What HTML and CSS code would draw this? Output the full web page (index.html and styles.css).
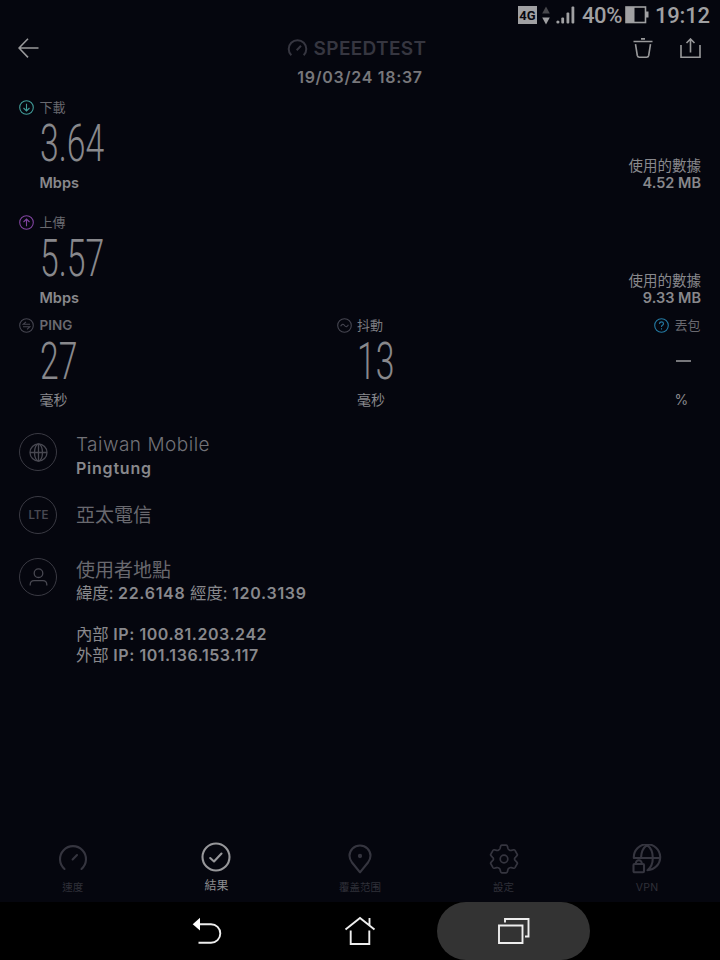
FILE: index.html
```html
<!DOCTYPE html>
<html lang="zh-Hant">
<head>
  <meta charset="UTF-8" />
  <meta name="viewport" content="width=device-width, initial-scale=1.0"/>
  <title>Speedtest</title>
  <link rel="stylesheet" href="styles.css">
</head>
<body>

  <!-- Status bar -->
  <div class="status-bar">
    <span class="net">4G</span>
    <svg class="updown" width="8" height="19" viewBox="0 0 8 19"><path d="M0.2 7.5L4 0.5L7.8 7.5z" fill="#48484c"/><path d="M0.2 11.5L4 18.5L7.8 11.5z" fill="#a0a0a2"/></svg>
    <svg class="signal" width="19" height="18" viewBox="0 0 19 18"><circle cx="1.9" cy="16" r="1.6"/><rect x="5.3" y="11.5" width="2.8" height="6" rx="1"/><rect x="10.5" y="6.5" width="2.8" height="11" rx="1"/><rect x="15.5" y="0.5" width="2.8" height="17" rx="1"/></svg>
    <span class="percent">40%</span>
    <svg class="battery" width="24" height="18" viewBox="0 0 24 18"><rect x="1" y="1" width="19.5" height="15.5" fill="none" stroke="#a0a0a2" stroke-width="1.6"/><path d="M1 1h8.5v15.5H1zM21 5.5h2.5v6H21z" fill="#a0a0a2"/></svg>
    <span class="time">19:12</span>
  </div>

  <!-- Header -->
  <header class="header">
    <svg class="back" width="21" height="21" viewBox="0 0 21 21"><path d="M10 0.7L1 10L10 19.4M1 10H20.5"/></svg>
    <div class="brand">
      <div class="logo">
        <svg width="21" height="18" viewBox="0 0 21 18"><path d="M4.3 16.2A8.8 8.8 0 1 1 16.7 16.2M9.7 11.2L14 6.8"/></svg>
        <span>SPEEDTEST</span>
      </div>
      <p class="date">19/03/24 18:37</p>
    </div>
    <div class="actions">
      <svg width="20" height="21" viewBox="0 0 20 21"><path d="M0.5 3.5H19.5M8 0.9H12M2.5 6.2L4.3 17.5Q4.7 19.2 6.3 19.2H13.7Q15.3 19.2 15.7 17.5L17.5 6.2"/></svg>
      <svg width="21" height="21" viewBox="0 0 21 21"><path d="M1 7V19.3H20V7M10.5 14.5V1M6.5 5L10.5 1L14.5 5"/></svg>
    </div>
  </header>

  <!-- Results -->
  <main class="results">
    <section class="metric speed">
      <div>
        <div class="label"><svg class="download" width="15" height="15" viewBox="0 0 15 15"><circle cx="7.5" cy="7.5" r="6.8"/><path d="M7.5 3.7V11M4.5 8L7.5 11L10.5 8"/></svg>下載</div>
        <div class="value"><span>3.64</span></div>
        <div class="unit">Mbps</div>
      </div>
      <div class="used">使用的數據<b>4.52 MB</b></div>
    </section>

    <section class="metric speed">
      <div>
        <div class="label"><svg class="upload" width="15" height="15" viewBox="0 0 15 15"><circle cx="7.5" cy="7.5" r="6.8"/><path d="M7.5 11.3V4M4.5 7L7.5 4L10.5 7"/></svg>上傳</div>
        <div class="value"><span>5.57</span></div>
        <div class="unit">Mbps</div>
      </div>
      <div class="used">使用的數據<b>9.33 MB</b></div>
    </section>

    <section class="latency">
      <div class="metric">
        <div class="label ping"><svg width="15" height="15" viewBox="0 0 15 15"><circle cx="7.5" cy="7.5" r="6.8"/><path d="M11 6.3H4.2L7 3.8M4 8.8H10.8L8 11.3"/></svg>PING</div>
        <div class="value"><span>27</span></div>
        <div class="unit zh">毫秒</div>
      </div>
      <div class="metric">
        <div class="label bright"><svg width="15" height="15" viewBox="0 0 15 15"><circle cx="7.5" cy="7.5" r="6.8"/><path d="M3.6 8.3Q5.5 4.8 7.5 7.5Q9.5 10.2 11.4 6.7"/></svg>抖動</div>
        <div class="value"><span>13</span></div>
        <div class="unit zh">毫秒</div>
      </div>
      <div class="metric">
        <div class="label"><svg class="help" width="15" height="15" viewBox="0 0 15 15"><circle cx="7.5" cy="7.5" r="6.8"/><path d="M5.4 5.9Q5.6 3.9 7.5 3.9Q9.5 3.9 9.5 5.7Q9.5 6.7 8.4 7.3Q7.5 7.8 7.5 8.9M7.5 10.3V11.5"/></svg>丟包</div>
        <div class="value"><i class="dash"></i></div>
        <div class="unit zh">%</div>
      </div>
    </section>
  </main>

  <!-- Connection details -->
  <section class="details">
    <div class="row carrier">
      <div class="circle"><svg width="19" height="19" viewBox="0 0 19 19"><circle cx="9.5" cy="9.5" r="8.5"/><ellipse cx="9.5" cy="9.5" rx="4" ry="8.5"/><path d="M1 9.5H18M9.5 1V18"/></svg></div>
      <div class="info">
        <h2 class="latin">Taiwan Mobile</h2>
        <p class="place">Pingtung</p>
      </div>
    </div>
    <div class="row">
      <div class="circle"><span>LTE</span></div>
      <div class="info single"><h2>亞太電信</h2></div>
    </div>
    <div class="row user">
      <div class="circle"><svg width="19" height="18" viewBox="0 0 19 18"><circle cx="9.5" cy="5.2" r="4.3"/><path d="M1.2 17.5V16.5Q1.4 12.6 5 12.6H14Q17.6 12.6 17.8 16.5V17.5"/></svg></div>
      <div class="info">
        <h2>使用者地點</h2>
        <p class="coords">緯度: <b>22.6148</b> 經度: <b>120.3139</b></p>
        <p class="ip first">內部 <b>IP: 100.81.203.242</b></p>
        <p class="ip">外部 <b>IP: 101.136.153.117</b></p>
      </div>
    </div>
  </section>

  <!-- Tabs -->
  <nav class="tabs">
    <div class="tab">
      <svg width="30" height="30" viewBox="0 0 30 30"><path d="M6.5 25A13 13 0 1 1 23.5 25M14.6 15.4L19 11"/></svg>
      <span>速度</span>
    </div>
    <div class="tab active">
      <svg width="30" height="30" viewBox="0 0 30 30"><circle cx="15" cy="15" r="13.5"/><path d="M9.2 16L13 19.5L20.5 11.5"/></svg>
      <span>結果</span>
    </div>
    <div class="tab">
      <svg width="30" height="30" viewBox="0 0 30 30"><path d="M15 28.3L7 18.5Q4.5 15 4.5 11.8A10.5 10.3 0 0 1 25.5 11.8Q25.5 15 23 18.5z"/><circle cx="15" cy="12" r="1.1"/></svg>
      <span>覆盖范围</span>
    </div>
    <div class="tab thin">
      <svg width="30" height="30" viewBox="0 0 30 30"><circle cx="15" cy="15" r="3.8"/><path d="M12.8 1.2H17.2Q18.2 1.2 18.4 2.3L18.9 4.4Q19.2 5.5 20.3 6Q21.3 6.7 22.4 6.4L24.6 5.8Q25.5 5.6 26 6.4L28.2 10.2Q28.7 11 28 11.7L26.4 13.3Q25.5 14.1 25.5 15T26.4 16.7L28 18.3Q28.7 19 28.2 19.8L26 23.6Q25.5 24.4 24.6 24.2L22.4 23.6Q21.3 23.3 20.3 24Q19.2 24.5 18.9 25.6L18.4 27.7Q18.2 28.8 17.2 28.8H12.8Q11.8 28.8 11.6 27.7L11.1 25.6Q10.8 24.5 9.7 24Q8.7 23.3 7.6 23.6L5.4 24.2Q4.5 24.4 4 23.6L1.8 19.8Q1.3 19 2 18.3L3.6 16.7Q4.5 15.9 4.5 15T3.6 13.3L2 11.7Q1.3 11 1.8 10.2L4 6.4Q4.5 5.6 5.4 5.8L7.6 6.4Q8.7 6.7 9.7 6Q10.8 5.5 11.1 4.4L11.6 2.3Q11.8 1.2 12.8 1.2z"/></svg>
      <span>設定</span>
    </div>
    <div class="tab">
      <svg width="30" height="30" viewBox="0 0 30 30"><path d="M1.8 13.5A13.2 13 0 1 1 15.5 26.2M1.8 14H28.2M9 14Q9.3 5 15 1.2Q20.8 5 20.8 14Q20.8 22 15.5 26.2"/><rect x="1.5" y="20" width="10.5" height="8.3" rx="1"/><path d="M3.8 20V19.5A3 3.3 0 0 1 9.8 19.5V20"/></svg>
      <span class="vpn">VPN</span>
    </div>
  </nav>

  <!-- System navigation -->
  <div class="system">
    <div class="key"><svg width="30" height="28" viewBox="0 0 30 28"><path d="M7 7.2H19A9.3 9.3 0 0 1 19 25.8H6.5"/><path class="fill" d="M0.7 7.2L8 0.8V13.6z"/></svg></div>
    <div class="key"><svg width="32" height="30" viewBox="0 0 32 30"><path d="M1.5 13.5L16 2L30.5 13.5M25.5 9V2M6.7 14.5V28H25.3V14.5"/></svg></div>
    <div class="key pressed"><svg width="32" height="28" viewBox="0 0 32 28"><path d="M1 8.5H24.5V26H1zM7 5.5V2H30.5V19.5H27"/></svg></div>
  </div>

</body>
</html>
```
FILE: styles.css
```css
:root {
  --bg: #05060e;
  --text: #88888c;
  --dim: #69696f;
  --faint: #363640;
  --bar: #a0a0a2;
  --font: Inter, 'Noto Sans CJK TC', sans-serif;
}

* {
  margin: 0;
  padding: 0;
  box-sizing: border-box;
}

body {
  background: var(--bg);
  color: var(--text);
  font-family: var(--font);
  width: 720px;
  height: 960px;
  display: flex;
  flex-direction: column;
  overflow: hidden;
}

svg {
  fill: none;
  flex: none;
}

/* status bar */
.status-bar {
  height: 30px;
  padding-right: 10px;
  display: flex;
  justify-content: flex-end;
  align-items: center;
  color: var(--bar);
  font-family: Roboto, sans-serif;
  font-size: 22px;
  font-weight: 500;
  line-height: 30px;
}

.net {
  width: 19px;
  height: 18px;
  background: var(--bar);
  color: #08080e;
  font-size: 13px;
  font-weight: 700;
  line-height: 19px;
  text-align: center;
}

.updown {
  margin: 0 6px 0 5px;
}

.signal {
  fill: var(--bar);
}

.percent {
  width: 43px;
  margin-left: 7px;
  padding-top: 2px;
  letter-spacing: -0.4px;
}

.time {
  width: 55px;
  margin-left: 6px;
  padding-top: 2px;
  letter-spacing: -0.2px;
}

/* header */
.header {
  height: 67px;
  padding: 8px 19px 0 18px;
  display: flex;
  justify-content: space-between;
}

.header svg {
  stroke: #99999b;
  stroke-width: 1.6;
}

.back {
  margin-right: 48px;
}

.logo {
  height: 20px;
  margin-right: 7px;
  display: flex;
  align-items: center;
  gap: 6px;
  color: var(--faint);
  font-size: 19px;
  font-weight: 600;
  letter-spacing: 0.35px;
}

.logo svg {
  stroke: var(--faint);
  stroke-width: 2;
}

.date {
  margin-top: 9px;
  font-size: 16px;
  font-weight: 600;
  line-height: 20px;
  letter-spacing: 0.7px;
  text-align: center;
  color: #77777b;
}

.actions {
  display: flex;
  gap: 27px;
}

/* results */
.results {
  padding: 0 19px;
}

.speed {
  display: flex;
  justify-content: space-between;
  align-items: flex-end;
  margin-bottom: 17px;
}

.speed + .latency {
  margin-top: -12px;
}

.label {
  height: 20px;
  display: flex;
  align-items: center;
  gap: 5.5px;
  font-size: 13px;
  line-height: 20px;
  color: var(--dim);
}

.label svg {
  stroke: #454550;
  stroke-width: 1.1;
}

.label .download {
  stroke: #419c99;
}

.label .upload {
  stroke: #8144a0;
}

.label .help {
  stroke: #247aa3;
}

.ping {
  font-size: 13.5px;
  font-weight: 600;
  line-height: 21px;
}

.bright {
  color: #7b7b80;
}

.value {
  height: 52px;
  padding-left: 20.5px;
  font-family: Roboto, sans-serif;
  font-size: 51px;
  font-weight: 300;
  line-height: 54px;
}

.value span {
  display: inline-block;
  transform: scaleX(0.66);
  transform-origin: left;
}

.dash {
  display: block;
  width: 15px;
  border-top: 25px solid transparent;
  border-bottom: 2px solid #77777b;
  margin-left: 1px;
}

.unit {
  height: 26px;
  padding-left: 20.5px;
  font-size: 14.5px;
  font-weight: 600;
  line-height: 28px;
}

.unit.zh {
  font-size: 14px;
  font-weight: 400;
  line-height: 26px;
}

.used {
  padding-bottom: 4px;
  font-size: 14.5px;
  line-height: 17px;
  text-align: right;
}

.used b {
  display: block;
  font-weight: 600;
}

.latency {
  display: grid;
  grid-template-columns: 317.5px 317.5px auto;
}

/* connection details */
.details {
  flex: 1;
  padding: 20px 19px 0;
}

.row {
  display: flex;
  gap: 18.5px;
  margin-bottom: 24px;
}

.row.carrier {
  height: 39px;
}

.circle {
  width: 38px;
  height: 38px;
  margin-left: 0.4px;
  border: 1px solid #3a3a43;
  border-radius: 50%;
  display: flex;
  justify-content: center;
  align-items: center;
  flex: none;
  color: #484851;
  font-size: 11.5px;
  font-weight: 600;
}

.circle svg {
  stroke: #484851;
  stroke-width: 1.3;
}

.info h2 {
  font-size: 19px;
  font-weight: 400;
  line-height: 24px;
  color: var(--dim);
}

.info .latin {
  font-weight: 300;
  letter-spacing: 0.5px;
  color: #727278;
}

.info b {
  font-size: 16px;
  font-weight: 600;
  letter-spacing: 0.55px;
}

.info p {
  font-size: 16.4px;
  line-height: 24px;
  white-space: nowrap;
}

.info .place {
  font-size: 16px;
  font-weight: 600;
  line-height: 22px;
  letter-spacing: 0.8px;
}

.single {
  padding-top: 8px;
}

.user .info {
  padding-top: 1px;
}

.info .coords {
  line-height: 21px;
}

.coords b {
  letter-spacing: 0.7px;
}

.info .ip {
  line-height: 21px;
}

.info .first {
  margin-top: 20px;
}

/* tabs */
.tabs {
  height: 62px;
  padding: 4px 1px 0;
  display: grid;
  grid-template-columns: repeat(5, 1fr);
}

.tab {
  display: flex;
  flex-direction: column;
  align-items: center;
  font-size: 10.5px;
  line-height: 20px;
  color: #303039;
}

.tab svg {
  stroke: #35353f;
  stroke-width: 2.1;
  stroke-linecap: round;
  stroke-linejoin: round;
}

.tab span {
  margin-top: 4px;
}

.tab.thin svg {
  stroke-width: 1.7;
}

.tab.active {
  margin-top: -2px;
  color: #8d8d90;
  font-size: 12px;
}

.tab.active svg {
  stroke: #97979a;
}

.vpn {
  letter-spacing: 0.3px;
}

/* system navigation */
.system {
  height: 58px;
  background: #000;
  display: flex;
  justify-content: center;
}

.key {
  width: 153.5px;
  display: flex;
  justify-content: center;
  align-items: center;
}

.key svg {
  stroke: #eee;
  stroke-width: 1.9;
}

.key .fill {
  fill: #fff;
  stroke: none;
}

.pressed {
  background: #333;
  border-radius: 29px;
}
```
